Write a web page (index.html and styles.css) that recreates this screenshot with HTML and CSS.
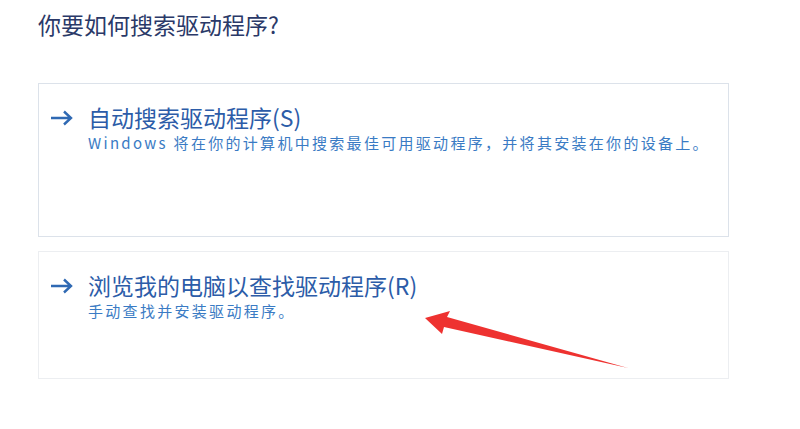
FILE: index.html
```html
<!DOCTYPE html>
<html lang="zh-CN">
<head>
  <meta charset="UTF-8">
  <meta name="viewport" content="width=device-width, initial-scale=1.0">
  <title>更新驱动程序</title>
  <link rel="stylesheet" href="styles.css">
</head>
<body>
  <div class="page">
    <h1 class="question">你要如何搜索驱动程序?</h1>

    <div class="option option-first">
      <svg class="go" width="23" height="16" viewBox="0 0 23 16">
        <path d="M1 8 H21 M14 1.5 L21 8 L14 14.5" fill="none" stroke="#2f69b3" stroke-width="2.4"/>
      </svg>
      <div class="text">
        <div class="name">自动搜索驱动程序(S)</div>
        <div class="desc">Windows 将在你的计算机中搜索最佳可用驱动程序，并将其安装在你的设备上。</div>
      </div>
    </div>

    <div class="option option-second">
      <svg class="go" width="23" height="16" viewBox="0 0 23 16">
        <path d="M1 8 H21 M14 1.5 L21 8 L14 14.5" fill="none" stroke="#2f69b3" stroke-width="2.4"/>
      </svg>
      <div class="text">
        <div class="name">浏览我的电脑以查找驱动程序(R)</div>
        <div class="desc">手动查找并安装驱动程序。</div>
      </div>
    </div>
  </div>

  <!-- 红色标注箭头 -->
  <svg class="mark" width="800" height="429" viewBox="0 0 800 429">
    <path d="M425 318 L450 311 L447 317 L628 368 L444 327 L442 334 Z" fill="#ee3230"/>
  </svg>
</body>
</html>
```

FILE: styles.css
```css
*{
  margin: 0;
  padding: 0;
}
body{
  background: #fff;
  font-family: "Microsoft YaHei", "Noto Sans CJK SC", "Noto Sans", sans-serif;
}
.page{
  padding: 9px 0 0 38px;
  width: 691px;
}
.question{
  font-size: 23px;
  font-weight: normal;
  line-height: 30px;
  color: #2a3968;
  margin-bottom: 44px;
}
.option{
  display: flex;
  align-items: flex-start;
  gap: 15px;
  padding: 18px 0 0 11px;
  box-sizing: border-box;
}
.option-first{
  height: 154px;
  border: 1px solid #dce2ea;
  margin-bottom: 14px;
}
.option-second{
  height: 128px;
  border: 1px solid #eceef1;
}
.go{
  flex-shrink: 0;
  margin-top: 8px;
}
.name{
  font-size: 23px;
  line-height: 30px;
  color: #2c5ca8;
}
.desc{
  font-size: 15px;
  line-height: 22px;
  letter-spacing: 2.3px;
  color: #3a7bc4;
}
.mark{
  position: absolute;
  left: 0;
  top: 0;
  pointer-events: none;
}
```
